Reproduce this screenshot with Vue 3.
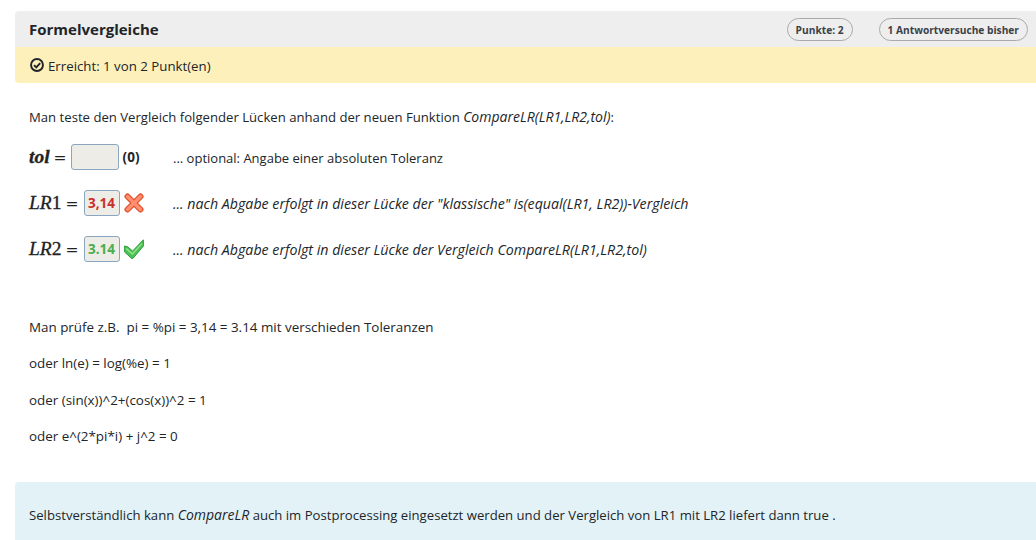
<template>
  <div class="page">
    <div class="card-head">
      <h3 class="title">Formelvergleiche</h3>
      <div class="badges">
        <span class="badge">Punkte: 2</span>
        <span class="badge">1 Antwortversuche bisher</span>
      </div>
    </div>
    <div class="result">
      <svg class="check-circle" viewBox="0 0 16 16" width="14" height="14">
        <circle cx="8" cy="8" r="6.8" fill="none" stroke="#212529" stroke-width="2.2" />
        <path d="M4.6 8.2 7.2 10.8 11.6 5.8" fill="none" stroke="#212529" stroke-width="2.2" />
      </svg>
      <span class="result-text">Erreicht: 1 von 2 Punkt(en)</span>
    </div>

    <div class="content">
      <p class="intro">Man teste den Vergleich folgender Lücken anhand der neuen Funktion <em>CompareLR(LR1,LR2,tol)</em>:</p>

      <div class="gap-row first">
        <div class="lead">
          <span class="math"><i class="bold">tol</i><span class="eq tight">=</span></span>
          <span class="input wide"></span>
          <b class="zero">(0)</b>
        </div>
        <span class="note plain">... optional: Angabe einer absoluten Toleranz</span>
      </div>

      <div class="gap-row second">
        <div class="lead">
          <span class="math"><i>LR</i>1<span class="eq">=</span></span>
          <span class="input red">3,14</span>
          <svg class="mark" viewBox="0 0 20 20" width="20" height="20">
            <path d="M3.5 3.5 16.5 16.5M16.5 3.5 3.5 16.5" fill="none" stroke="#e2502f" stroke-width="6" stroke-linecap="round" />
            <path d="M3.5 3.5 16.5 16.5M16.5 3.5 3.5 16.5" fill="none" stroke="#ff8f6e" stroke-width="3.4" stroke-linecap="round" />
          </svg>
        </div>
        <em class="note">... nach Abgabe erfolgt in dieser Lücke der "klassische" is(equal(LR1, LR2))-Vergleich</em>
      </div>

      <div class="gap-row third">
        <div class="lead">
          <span class="math"><i>LR</i>2<span class="eq">=</span></span>
          <span class="input green">3.14</span>
          <svg class="mark" viewBox="0 0 20 20" width="20" height="20">
            <path d="M0.6 7 3.4 7.6 8.6 12 19.4 0.8 19.4 7 9 19.4 7.6 19.4 0.6 13Z" fill="#4fbf55" stroke="#2f9e3f" stroke-width="1" stroke-linejoin="round" />
            <path d="M2 9.4 8.4 15 18 4.6" fill="none" stroke="#8fe58c" stroke-width="1.4" />
          </svg>
        </div>
        <em class="note">... nach Abgabe erfolgt in dieser Lücke der Vergleich CompareLR(LR1,LR2,tol)</em>
      </div>

      <div class="lines">
        <p>Man prüfe z.B.&nbsp; pi = %pi = 3,14 = 3.14 mit verschieden Toleranzen</p>
        <p>oder ln(e) = log(%e) = 1</p>
        <p>oder (sin(x))^2+(cos(x))^2 = 1</p>
        <p>oder e^(2*pi*i) + j^2 = 0</p>
      </div>
    </div>

    <div class="hint">
      Selbstverständlich kann <em>CompareLR</em> auch im Postprocessing eingesetzt werden und der Vergleich von LR1 mit LR2 liefert dann true .
    </div>
  </div>
</template>

<script setup>
</script>

<style>
body {
  background: #fff;
  overflow: hidden;
}
</style>

<style scoped>
.page {
  padding: 11px 0 0 15px;
  font-family: "Open Sans", "Noto Sans", sans-serif;
  font-size: 13.15px;
  color: #212529;
  height: 529px;
  overflow: hidden;
}
.card-head {
  height: 36px;
  background: #eee;
  border-radius: 4px 0 0 0;
  display: flex;
  align-items: center;
  justify-content: space-between;
  padding: 0 8px 0 14px;
}
.title {
  margin: 0;
  font-size: 15px;
  font-weight: 700;
}
.badges {
  display: flex;
  gap: 26px;
}
.badge {
  height: 23px;
  line-height: 22px;
  box-sizing: border-box;
  border: 1px solid #aaa;
  border-radius: 12px;
  padding: 0 8px;
  font-size: 10.2px;
  font-weight: 700;
  color: #3b4148;
}
.result {
  height: 36px;
  background: #fdf0bb;
  border-radius: 0 0 0 4px;
  display: flex;
  align-items: center;
  gap: 4px;
  padding-left: 15px;
}
.result-text {
  font-size: 13.25px;
  padding-top: 2px;
}
.content {
  padding-left: 14px;
}
.intro {
  margin: 24px 0 0;
  line-height: 20px;
}
em {
  font-size: 14px;
}
.gap-row {
  display: flex;
  align-items: center;
  height: 26px;
  font-size: 13px;
}
.first { margin-top: 17px; }
.second { margin-top: 20px; }
.third { margin-top: 20px; }
.lead {
  width: 144px;
  display: flex;
  align-items: center;
}
.math {
  font-family: "Liberation Serif", serif;
  font-size: 19.5px;
  color: #222;
  display: inline-flex;
  align-items: baseline;
  -webkit-text-stroke: 0.3px #222;
}
.math i.bold { font-weight: 700; }
.eq {
  margin: 0 5px 0 4px;
  font-family: "DejaVu Serif", serif;
  font-size: 15.5px;
  -webkit-text-stroke: 0;
}
.eq.tight { margin-right: 4px; }
.input {
  box-sizing: border-box;
  height: 26px;
  width: 36px;
  background: #eeece6;
  border: 1px solid #8ba6c1;
  border-radius: 3px;
  display: flex;
  align-items: center;
  justify-content: center;
  font-size: 13.5px;
  font-weight: 700;
}
.input.wide { width: 48px; }
.red { color: #c9302c; }
.green { color: #4cae4c; }
.zero {
  margin-left: 4px;
  font-size: 13.5px;
}
.mark { margin-left: 4px; }
em.note { font-size: 14.2px; }
.note.plain { padding-top: 2px; }
.lines {
  margin-top: 55px;
  font-size: 13.4px;
}
.lines p {
  margin: 0 0 16.3px;
  line-height: 20px;
}
.hint {
  margin-top: 36px;
  height: 58px;
  background: #e3f2f7;
  border-radius: 4px 0 0 0;
  padding: 23px 0 0 14px;
  line-height: 20px;
}
</style>
